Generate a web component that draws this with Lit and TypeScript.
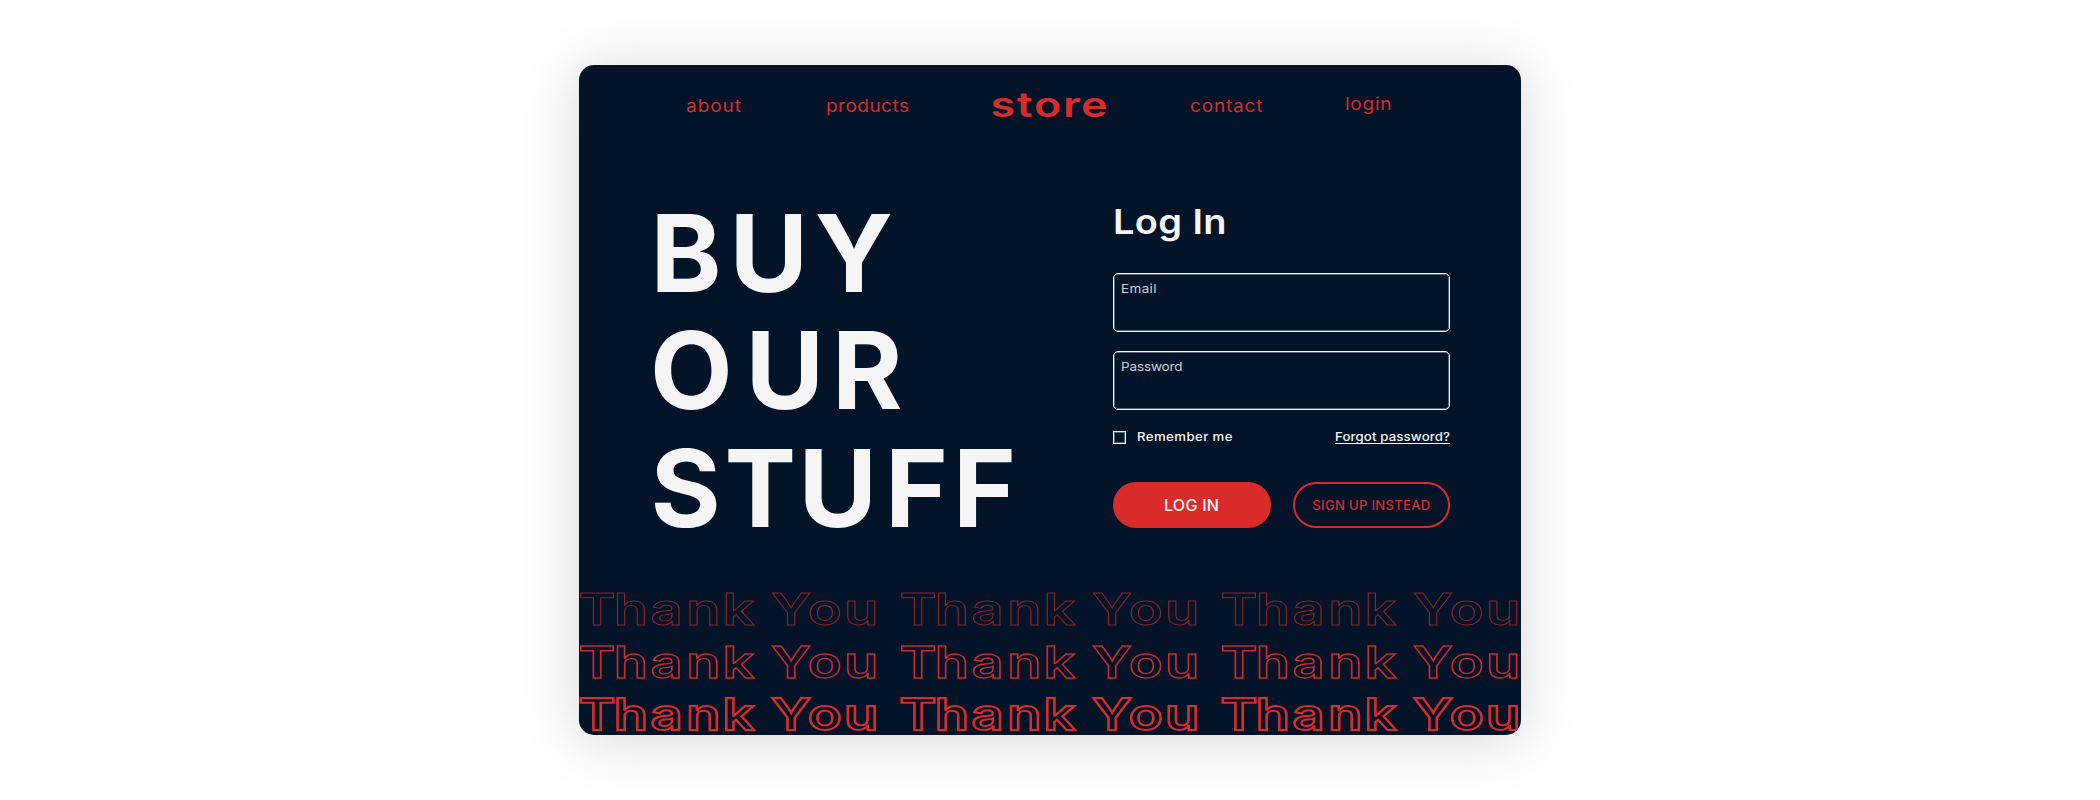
import { LitElement, html, css, svg } from "lit";
import { customElement, property } from "lit/decorators.js";

/** One line of text, slightly extended, whose tracking fills a given width. */
@customElement("tracked-text")
class TrackedText extends LitElement {
  static styles = css`
    :host { display: block; white-space: nowrap; }
    .line { display: inline-block; white-space: pre; transform-origin: 0 50%; }
  `;
  @property() text = "";
  @property({ type: Number }) span = 0;
  @property({ type: Number }) stretch = 1.1;
  render() {
    return html`<span class="line">${this.text}</span>`;
  }
  updated() {
    const line = this.renderRoot.querySelector(".line") as HTMLElement;
    line.style.transform = "none";
    line.style.letterSpacing = "0px";
    const natural = line.getBoundingClientRect().width;
    const gap = (this.span / this.stretch - natural) / (this.text.length - 1);
    line.style.letterSpacing = gap.toFixed(3) + "px";
    line.style.transform = `scaleX(${this.stretch})`;
    this.style.width = this.span + "px";
  }
}

const HERO = [
  { word: "BUY", y: 84.6, x: "-3.5 75.5 160.5" },
  { word: "OUR", y: 202.3, x: "-4 91.5 178" },
  { word: "STUFF", y: 320, x: "-3.5 70.5 144.5 231 299" },
];

const PHRASE_PITCH = 321;
const PHRASE_STRETCH = 1.3;
const PHRASE_X = [-0.4, 34.8, 71.6, 107.2, 143.4, 178, 192, 228.8, 265];

@customElement("app-root")
class AppRoot extends LitElement {
  static styles = css`
    :host {
      display: flex;
      justify-content: center;
      box-sizing: border-box;
      height: 800px;
      padding-top: 65px;
      background: #fff;
      font-family: Inter, "Open Sans", sans-serif;
      --red: #da2b2b;
      --navy: #031328;
      --light: #f5f5f5;
    }
    .card {
      width: 942px;
      height: 670px;
      border-radius: 15px;
      overflow: hidden;
      background: var(--navy);
      box-shadow: 0 4px 58px rgba(0, 0, 0, 0.17);
      display: flex;
      flex-direction: column;
    }
    svg { display: block; overflow: visible; }
    nav {
      display: grid;
      grid-template-columns: 139.5px 165px 199px 155px auto;
      align-items: start;
      height: 60px;
      padding: 20px 0 0 107px;
      box-sizing: border-box;
      color: var(--red);
      font-size: 17.3px;
      line-height: 22px;
    }
    .link { padding-top: 10px; }
    .link.raised { padding-top: 8px; }
    .logo { font: 580 34.5px Inter, sans-serif; fill: var(--red); }
    .main {
      display: grid;
      grid-template-columns: 459px 337px;
      padding: 82px 0 0 75px;
      height: 390px;
    }
    .hero { font: 680 107.3px Inter, sans-serif; fill: var(--light); }
    .form { color: var(--light); display: flex; flex-direction: column; }
    .title {
      font-size: 34.5px;
      font-weight: 600;
      line-height: 40px;
      margin: -5px 0 0 -0.5px;
      height: 71px;
    }
    .field {
      box-sizing: border-box;
      height: 59px;
      border: 1px solid var(--light);
      box-shadow: inset 0 0 0 1px rgba(245, 245, 245, 0.35);
      border-radius: 5px;
      margin-bottom: 19px;
      padding: 6.5px 0 0 6.5px;
      font-size: 12.3px;
      line-height: 16px;
      color: #ccd0d4;
    }
    .options {
      display: flex;
      align-items: center;
      height: 16px;
      font-size: 12px;
      font-weight: 480;
      line-height: 16px;
    }
    .box {
      width: 13px;
      height: 13px;
      box-sizing: border-box;
      border: 1px solid var(--light);
      box-shadow: inset 0 0 0 1px rgba(245, 245, 245, 0.35);
      margin-right: 11px;
    }
    .forgot { margin-left: auto; border-bottom: 1px solid var(--light); line-height: 14px; height: 13px; }
    .buttons { display: flex; justify-content: space-between; margin-top: 37px; }
    .button {
      box-sizing: border-box;
      width: 157.5px;
      height: 46px;
      border-radius: 23px;
      border: 2px solid var(--red);
      display: flex;
      align-items: center;
      justify-content: center;
      color: var(--red);
      font-size: 13px;
      font-weight: 450;
    }
    .button.filled { background: var(--red); color: var(--light); font-size: 15.5px; font-weight: 500; }
    .thanks { font: 620 43.3px Inter, sans-serif; fill: none; stroke: var(--red); }
    .faint { stroke-width: 0.9px; opacity: 0.65; }
    .medium { stroke-width: 1.3px; opacity: 0.95; }
    .strong { stroke-width: 2px; }
  `;

  private thanksRow(name: string, y: number) {
    return [0, 1, 2].map((i) => {
      const x = PHRASE_X.map((v) => ((v + i * PHRASE_PITCH) / PHRASE_STRETCH).toFixed(2)).join(" ");
      return svg`<text class=${name} transform="scale(${PHRASE_STRETCH} 1)" x=${x} y=${y}>Thank You</text>`;
    });
  }

  render() {
    return html`
      <div class="card">
        <nav>
          <tracked-text class="link" text="about" span="55"></tracked-text>
          <tracked-text class="link" text="products" span="83"></tracked-text>
          <svg class="logo" width="118" height="40">
            <text transform="scale(1.3 1)" x="-0.3 19.8 33 55.3 69.2" y="32.3">store</text>
          </svg>
          <tracked-text class="link" text="contact" span="72.5"></tracked-text>
          <tracked-text class="link raised" text="login" span="46.5"></tracked-text>
        </nav>
        <div class="main">
          <svg class="hero" width="380" height="330">
            ${HERO.map((l) => svg`<text x=${l.x} y=${l.y}>${l.word}</text>`)}
          </svg>
          <div class="form">
            <tracked-text class="title" text="Log In" span="113.5"></tracked-text>
            <div class="field"><tracked-text text="Email" span="35.5"></tracked-text></div>
            <div class="field"><tracked-text text="Password" span="61.5"></tracked-text></div>
            <div class="options">
              <span class="box"></span>
              <tracked-text text="Remember me" span="95.5"></tracked-text>
              <tracked-text class="forgot" text="Forgot password?" span="115"></tracked-text>
            </div>
            <div class="buttons">
              <div class="button filled"><tracked-text text="LOG IN" span="55" stretch="1.04"></tracked-text></div>
              <div class="button"><tracked-text text="SIGN UP INSTEAD" span="118" stretch="1"></tracked-text></div>
            </div>
          </div>
        </div>
        <svg class="thanks" width="942" height="138">
          ${this.thanksRow("faint", 28.4)}
          ${this.thanksRow("medium", 80.6)}
          ${this.thanksRow("strong", 132.7)}
        </svg>
      </div>
    `;
  }
}
